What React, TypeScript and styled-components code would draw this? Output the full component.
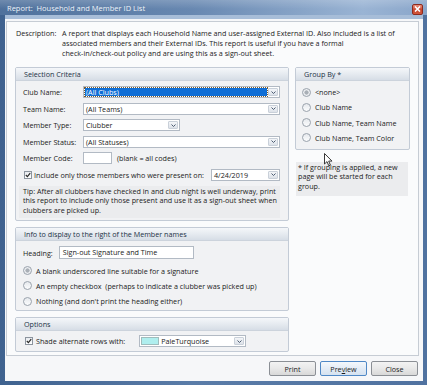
import React from "react";
import styled, { createGlobalStyle } from "styled-components";

const GlobalStyle = createGlobalStyle`
  body {
    margin: 0;
    font-family: "Open Sans", "Noto Sans", sans-serif;
    font-size: 7.2px;
    color: #222;
  }
`;

function Chevron() {
  return (
    <svg width="5" height="3" viewBox="0 0 5 3">
      <path d="M0.5 0.5 L2.5 2.5 L4.5 0.5" fill="none" stroke="#4d5d72" strokeWidth="1" />
    </svg>
  );
}

function Check() {
  return (
    <svg width="6" height="6" viewBox="0 0 6 6">
      <path d="M0.8 3 L2.4 4.6 L5.2 1.2" fill="none" stroke="#2a2a2a" strokeWidth="1.2" />
    </svg>
  );
}

function Cursor() {
  return (
    <svg width="9" height="14" viewBox="0 0 9 14">
      <path d="M0.5 0.5 L0.5 11 L3 8.6 L4.8 12.8 L6.4 12.1 L4.7 8.1 L8 8.1 Z" fill="#fff" stroke="#222" strokeWidth="0.9" />
    </svg>
  );
}

export default function App() {
  return (
    <>
      <GlobalStyle />
      <Window>
        <TitleBar>
          <TitleText>Report:&nbsp; Household and Member ID List</TitleText>
          <CloseBox>
            <svg width="7" height="6" viewBox="0 0 7 6">
              <path d="M1 0.5 L6 5.5 M6 0.5 L1 5.5" stroke="#fff" strokeWidth="1.6" />
            </svg>
          </CloseBox>
        </TitleBar>
        <Client>
          <Panel>
            <DescRow>
              <DescLabel>Description:</DescLabel>
              <DescText>
                A report that displays each Household Name and user-assigned External ID. Also included is a list of
                <br />
                associated members and their External IDs. This report is useful if you have a formal
                <br />
                check-in/check-out policy and are using this as a sign-out sheet.
              </DescText>
            </DescRow>
            <Columns>
              <LeftCol>
                <GroupBox>
                  <GroupHeader>Selection Criteria</GroupHeader>
                  <CriteriaBody>
                    <FieldRow>
                      <FieldLabel>Club Name:</FieldLabel>
                      <Combo $w={197}>
                        <ComboText $selected>(All Clubs)</ComboText>
                        <ComboButton><Chevron /></ComboButton>
                      </Combo>
                    </FieldRow>
                    <FieldRow>
                      <FieldLabel>Team Name:</FieldLabel>
                      <Combo $w={197}>
                        <ComboText>(All Teams)</ComboText>
                        <ComboButton><Chevron /></ComboButton>
                      </Combo>
                    </FieldRow>
                    <FieldRow>
                      <FieldLabel>Member Type:</FieldLabel>
                      <Combo $w={97}>
                        <ComboText>Clubber</ComboText>
                        <ComboButton><Chevron /></ComboButton>
                      </Combo>
                    </FieldRow>
                    <FieldRow>
                      <FieldLabel>Member Status:</FieldLabel>
                      <Combo $w={197}>
                        <ComboText>(All Statuses)</ComboText>
                        <ComboButton><Chevron /></ComboButton>
                      </Combo>
                    </FieldRow>
                    <FieldRow>
                      <FieldLabel>Member Code:</FieldLabel>
                      <TextInput $w={29} />
                      <Hint>(blank = all codes)</Hint>
                    </FieldRow>
                    <CheckRow>
                      <CheckBox><Check /></CheckBox>
                      <CheckLabel>Include only those members who were present on:</CheckLabel>
                      <DateCombo $w={69}>
                        <ComboText>4/24/2019</ComboText>
                        <ComboButton><Chevron /></ComboButton>
                      </DateCombo>
                    </CheckRow>
                    <TipBox>
                      Tip: After all clubbers have checked in and club night is well underway, print
                      <br />
                      this report to include only those present and use it as a sign-out sheet when
                      <br />
                      clubbers are picked up.
                    </TipBox>
                  </CriteriaBody>
                </GroupBox>

                <GroupBox>
                  <GroupHeader>Info to display to the right of the Member names</GroupHeader>
                  <InfoBody>
                    <HeadingRow>
                      <span>Heading:</span>
                      <TextInput $w={135} $h={13}>Sign-out Signature and Time</TextInput>
                    </HeadingRow>
                    <RadioRow>
                      <Radio $checked />
                      <span>A blank underscored line suitable for a signature</span>
                    </RadioRow>
                    <RadioRow>
                      <Radio />
                      <span>An empty checkbox&nbsp; (perhaps to indicate a clubber was picked up)</span>
                    </RadioRow>
                    <RadioRow>
                      <Radio />
                      <span>Nothing (and don't print the heading either)</span>
                    </RadioRow>
                  </InfoBody>
                </GroupBox>

                <GroupBox>
                  <GroupHeader>Options</GroupHeader>
                  <OptionsBody>
                    <CheckBox><Check /></CheckBox>
                    <OptionsLabel>Shade alternate rows with:</OptionsLabel>
                    <Combo $w={107}>
                      <Swatch />
                      <ComboText>PaleTurquoise</ComboText>
                      <ComboButton><Chevron /></ComboButton>
                    </Combo>
                  </OptionsBody>
                </GroupBox>
              </LeftCol>

              <RightCol>
                <GroupBox>
                  <GroupHeader>Group By *</GroupHeader>
                  <GroupByBody>
                    <RadioRow>
                      <Radio $checked />
                      <span>&lt;none&gt;</span>
                    </RadioRow>
                    <RadioRow>
                      <Radio />
                      <span>Club Name</span>
                    </RadioRow>
                    <RadioRow>
                      <Radio />
                      <span>Club Name, Team Name</span>
                    </RadioRow>
                    <RadioRow>
                      <Radio />
                      <span>Club Name, Team Color</span>
                    </RadioRow>
                  </GroupByBody>
                </GroupBox>
                <NoteBox>
                  * If grouping is applied, a new
                  <br />
                  page will be started for each
                  <br />
                  group.
                </NoteBox>
              </RightCol>
            </Columns>
          </Panel>
          <ButtonRow>
            <DialogButton>Print</DialogButton>
            <DialogButton $default>
              Pre<u>v</u>iew
            </DialogButton>
            <DialogButton>Close</DialogButton>
          </ButtonRow>
        </Client>
        <MousePointer>
          <Cursor />
        </MousePointer>
      </Window>
    </>
  );
}

const Window = styled.div`
  position: relative;
  width: 427px;
  height: 385px;
  box-sizing: border-box;
  display: flex;
  flex-direction: column;
  padding: 0 4px 4px 5px;
  background: linear-gradient(90deg, #3f628f 0%, #5a7ca8 45%, #5072a0 100%);
`;

const TitleBar = styled.div`
  height: 15px;
  margin: 0 -4px 0 -5px;
  padding: 0 4px 0 7px;
  display: flex;
  align-items: center;
  justify-content: space-between;
  background: linear-gradient(180deg, rgba(255, 255, 255, 0.18), rgba(255, 255, 255, 0) 60%),
    linear-gradient(90deg, #4f719c 0%, #6888b1 45%, #9ab4d4 85%, #8aa6ca 100%);
`;

const TitleText = styled.div`
  color: #eef3f8;
  font-size: 7.5px;
  padding-top: 1px;
`;

const CloseBox = styled.div`
  width: 11px;
  height: 11px;
  margin-top: 3px;
  box-sizing: border-box;
  border: 1px solid #8d2a1e;
  border-radius: 2px;
  background: linear-gradient(180deg, #e9907c, #c7432b 55%, #d2583c);
  display: flex;
  align-items: center;
  justify-content: center;
`;

const Client = styled.div`
  flex: 1;
  display: flex;
  flex-direction: column;
  border-top: 4px solid #a7bdd8;
  padding: 2px 4px 5px 1px;
  background: #f6f7f9;
`;

const Panel = styled.div`
  flex: 1;
  border: 1px solid #c6ccd4;
  background: #fafbfc;
  padding: 6px 8px 0 8px;
`;

const DescRow = styled.div`
  display: flex;
  padding-left: 1px;
  line-height: 10px;
  white-space: nowrap;
`;

const DescLabel = styled.div`
  width: 46px;
`;

const DescText = styled.div``;

const Columns = styled.div`
  display: flex;
  gap: 6px;
  margin-top: 9px;
`;

const LeftCol = styled.div`
  width: 274px;
  display: flex;
  flex-direction: column;
  gap: 6px;
`;

const RightCol = styled.div`
  width: 116px;
  display: flex;
  flex-direction: column;
`;

const GroupBox = styled.div`
  border: 1px solid #c3cbd6;
  border-radius: 2px;
  background: #f1f2f4;
  box-sizing: border-box;
`;

const GroupHeader = styled.div`
  height: 12px;
  line-height: 12px;
  padding-left: 8px;
  color: #233246;
  border-bottom: 1px solid #ccd3dc;
  background: linear-gradient(180deg, #f5f7fa 0%, #e3e8ee 60%, #d6dde6 100%);
  white-space: nowrap;
`;

const CriteriaBody = styled.div`
  display: flex;
  flex-direction: column;
  gap: 4.6px;
  padding: 5px 7px 2px 7px;
`;

const FieldRow = styled.div`
  display: flex;
  align-items: center;
  height: 12px;
`;

const FieldLabel = styled.div`
  width: 60px;
  white-space: nowrap;
`;

const Combo = styled.div<{ $w: number }>`
  width: ${(p) => p.$w}px;
  height: 12px;
  box-sizing: border-box;
  display: flex;
  align-items: stretch;
  border: 1px solid #b2bac4;
  background: #fff;
  padding: 1px;
  gap: 1px;
`;

const DateCombo = styled(Combo)`
  margin-left: auto;
  margin-right: 1px;
`;

const ComboText = styled.div<{ $selected?: boolean }>`
  flex: 1;
  display: flex;
  align-items: center;
  padding-left: 1px;
  white-space: nowrap;
  color: ${(p) => (p.$selected ? "#fff" : "#222")};
  background: ${(p) => (p.$selected ? "#0f6ed6" : "transparent")};
  outline: ${(p) => (p.$selected ? "1px dotted #7a5b2e" : "none")};
`;

const ComboButton = styled.div`
  width: 10px;
  box-sizing: border-box;
  border: 1px solid #c9d0d9;
  border-radius: 1px;
  background: linear-gradient(180deg, #f3f5f8, #dde2e9);
  display: flex;
  align-items: center;
  justify-content: center;
`;

const TextInput = styled.div<{ $w: number; $h?: number }>`
  width: ${(p) => p.$w}px;
  height: ${(p) => p.$h ?? 12}px;
  line-height: ${(p) => (p.$h ?? 12) - 2}px;
  box-sizing: border-box;
  border: 1px solid #b2bac4;
  background: #fff;
  padding-left: 3px;
  white-space: nowrap;
`;

const Hint = styled.span`
  margin-left: 5px;
`;

const CheckRow = styled.div`
  display: flex;
  align-items: center;
  height: 12px;
  padding-left: 1px;
`;

const CheckBox = styled.div`
  width: 8px;
  height: 8px;
  box-sizing: border-box;
  border: 1px solid #8c949e;
  background: linear-gradient(180deg, #e8ebef, #fff);
  display: flex;
  align-items: center;
  justify-content: center;
`;

const CheckLabel = styled.span`
  margin-left: 2px;
  white-space: nowrap;
`;

const TipBox = styled.div`
  margin: 0 1px 0 -4px;
  padding: 1px 4px 3px 4px;
  background: #ebecee;
  line-height: 9.6px;
  white-space: nowrap;
`;

const InfoBody = styled.div`
  display: flex;
  flex-direction: column;
  gap: 5.3px;
  padding: 5px 7px 4px 7px;
`;

const HeadingRow = styled.div`
  display: flex;
  align-items: center;
  gap: 6px;
  height: 13px;
  margin-bottom: 1px;
`;

const RadioRow = styled.div`
  display: flex;
  align-items: center;
  gap: 4px;
  height: 10px;
  white-space: nowrap;
`;

const Radio = styled.div<{ $checked?: boolean }>`
  width: 9px;
  height: 9px;
  box-sizing: border-box;
  border-radius: 50%;
  border: 1px solid #9aa2ac;
  background: ${(p) =>
    p.$checked
      ? "radial-gradient(circle, #a9afb6 0 1.8px, #eceef1 2.4px)"
      : "linear-gradient(180deg, #e6e9ed, #fbfcfd)"};
`;

const OptionsBody = styled.div`
  display: flex;
  align-items: center;
  padding: 4px 7px 4px 9px;
`;

const OptionsLabel = styled.span`
  margin: 0 14px 0 3px;
  white-space: nowrap;
`;

const Swatch = styled.div`
  width: 16px;
  border: 1px solid #9fbcbc;
  background: #afeeee;
`;

const GroupByBody = styled.div`
  display: flex;
  flex-direction: column;
  gap: 5.3px;
  padding: 6px 6px 6px 6px;
`;

const NoteBox = styled.div`
  margin: 12px 2px 0 1px;
  padding: 1px 2px 4px 2px;
  background: #ebecee;
  line-height: 9.6px;
  white-space: nowrap;
`;

const ButtonRow = styled.div`
  display: flex;
  justify-content: flex-end;
  gap: 4px;
  margin-top: 5px;
  padding-right: 1px;
`;

const DialogButton = styled.div<{ $default?: boolean }>`
  width: 47px;
  height: 15px;
  box-sizing: border-box;
  display: flex;
  align-items: center;
  justify-content: center;
  border-radius: 2px;
  border: 1px solid ${(p) => (p.$default ? "#4f88c6" : "#8b8f95")};
  background: ${(p) =>
    p.$default
      ? "linear-gradient(180deg, #f4f8fc, #e3ecf6 50%, #d5e2f0)"
      : "linear-gradient(180deg, #f3f3f3, #e8e8e8 50%, #d8d8d8)"};
  color: #1c1c1c;
`;

const MousePointer = styled.div`
  position: absolute;
  left: 324px;
  top: 153px;
  line-height: 0;
`;
